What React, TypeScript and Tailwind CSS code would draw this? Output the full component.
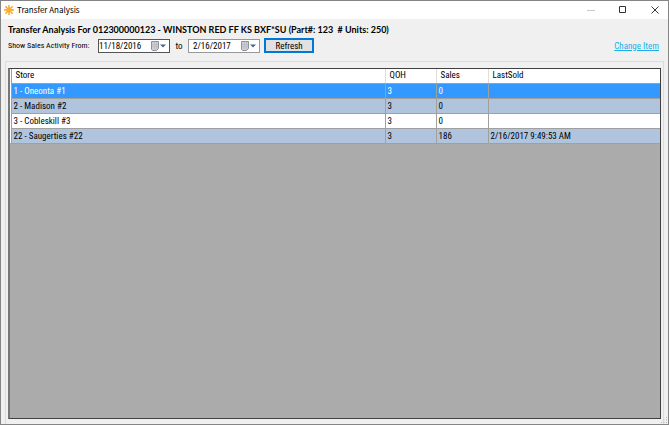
import { useState } from 'react'

type StoreRow = {
  store: string
  qoh: number
  sales: number
  lastSold: string
}

const rows: StoreRow[] = [
  { store: '1 - Oneonta #1', qoh: 3, sales: 0, lastSold: '' },
  { store: '2 - Madison #2', qoh: 3, sales: 0, lastSold: '' },
  { store: '3 - Cobleskill #3', qoh: 3, sales: 0, lastSold: '' },
  { store: '22 - Saugerties #22', qoh: 3, sales: 186, lastSold: '2/16/2017 9:49:53 AM' },
]

function SunIcon() {
  return (
    <svg className="h-[10px] w-[10px] shrink-0" viewBox="0 0 20 20" aria-hidden="true">
      <g stroke="#f2a11f" strokeWidth="2.8" strokeLinecap="round">
        <path d="M10 1v18M1 10h18M3.6 3.6l12.8 12.8M16.4 3.6L3.6 16.4" />
      </g>
      <circle cx="10" cy="10" r="5" fill="#f7b030" />
    </svg>
  )
}

function CalendarIcon() {
  return (
    <svg className="h-[10px] w-[18px]" viewBox="0 0 18 10" aria-hidden="true">
      <path d="M.5 .5h7v7l-2 2h-4l-1-1z" fill="#cdcdd5" stroke="#909098" />
      <path d="M1 3.5h6M1 5.5h6M3.5 1v7M5.5 1v7" stroke="#b4b4bd" strokeWidth=".5" />
      <path d="M9 3.5h6l-3 3z" fill="#47648c" />
    </svg>
  )
}

function DateField({ id, label, value, onChange, className }: {
  id: string
  label: string
  value: string
  onChange: (value: string) => void
  className: string
}) {
  return (
    <div className={`flex h-[14px] w-[72px] items-center border bg-white ${className}`}>
      <input
        id={id}
        aria-label={label}
        value={value}
        onChange={(e) => onChange(e.target.value)}
        className="h-full min-w-0 flex-1 bg-transparent outline-none"
      />
      <button type="button" aria-label={`${label} calendar`}>
        <CalendarIcon />
      </button>
    </div>
  )
}

export default function App() {
  const [from, setFrom] = useState('11/18/2016')
  const [to, setTo] = useState('2/16/2017')
  const [selected, setSelected] = useState(0)

  const rowColor = (idx: number) => {
    if (idx === selected) return 'bg-[#3399ff] text-white'
    return idx % 2 ? 'bg-[#b0c4de]' : 'bg-white'
  }

  return (
    <div className="flex h-screen flex-col border border-[#858585] bg-[#f0f0f0] font-['Roboto_Condensed','Liberation_Sans',sans-serif] text-[9px] leading-[14px] text-black">
      {/* Title bar */}
      <header className="flex h-[18px] shrink-0 items-center bg-white pl-[3px] pr-[9px]">
        <SunIcon />
        <h1 className="ml-[3px] flex-1 font-['Noto_Sans_CJK_SC',sans-serif] text-[8px]">Transfer Analysis</h1>
        <div className="flex items-center gap-6">
          <button type="button" aria-label="Minimize" disabled>
            <svg className="size-2" viewBox="0 0 8 8" stroke="#c8c8c8"><path d="M0 4.5h8" /></svg>
          </button>
          <button type="button" aria-label="Maximize">
            <svg className="size-2" viewBox="0 0 8 8" fill="none" stroke="#333"><path d="M.5 .5h6v6h-6z" /></svg>
          </button>
          <button type="button" aria-label="Close">
            <svg className="size-2" viewBox="0 0 8 8" stroke="#333"><path d="M.5 .5l7 7M7.5 .5l-7 7" /></svg>
          </button>
        </div>
      </header>

      <div className="shrink-0 px-[7px] pt-1">
        <h2 className="font-['Lato','Liberation_Sans',sans-serif] font-bold whitespace-pre">
          Transfer Analysis For 012300000123 - WINSTON RED FF KS BXF*SU (Part#: 123  # Units: 250)
        </h2>
        <form className="flex items-center pt-px" onSubmit={(e) => e.preventDefault()}>
          <label htmlFor="from" className="w-[90px] text-[8px] whitespace-nowrap">Show Sales Activity From:</label>
          <DateField id="from" label="From date" value={from} onChange={setFrom} className="border-[#555]" />
          <label htmlFor="to" className="w-[18px] text-center">to</label>
          <DateField id="to" label="To date" value={to} onChange={setTo} className="border-[#999] pl-1" />
          <button type="submit" className="ml-1 h-[15px] w-[50px] border-2 border-[#0078d7] bg-[#e1e1e1] leading-[10px]">
            Refresh
          </button>
          <a href="#change-item" className="ml-auto pr-[2px] text-[#1ab0e8] underline">Change Item</a>
        </form>
      </div>

      {/* Results */}
      <main className="mx-1 mt-2 flex min-h-0 flex-1 flex-col border border-b-0 border-[#dcdcdc] px-[2px] pb-[5px] pt-[6px]">
        <div className="flex-1 overflow-hidden border border-l-2 border-[#404040] border-l-[#777] bg-[#ababab]">
          <table className="w-full table-fixed border-collapse text-left">
            <colgroup>
              <col className="w-px" />
              <col />
              <col className="w-[51px]" />
              <col className="w-[52px]" />
              <col className="w-[172px]" />
            </colgroup>
            <thead>
              <tr className="h-[14px] bg-white leading-[13px]">
                <th className="border-r border-[#a0a0a0] p-0" />
                {['Store', 'QOH', 'Sales', 'LastSold'].map((name) => (
                  <th key={name} className="border-r border-b border-r-[#ddd] border-b-[#a0a0a0] p-0 pl-1 font-normal last:border-r-0">
                    {name}
                  </th>
                ))}
              </tr>
            </thead>
            <tbody>
              {rows.map((row, idx) => (
                <tr key={row.store} className={`h-[15px] ${rowColor(idx)}`} onClick={() => setSelected(idx)}>
                  <td className="border-r border-[#a0a0a0] bg-white p-0" />
                  {[row.store, row.qoh, row.sales, row.lastSold].map((value, col) => (
                    <td key={col} className="border-r border-b border-[#a0a0a0] p-0 pl-[2px] last:border-r-0">
                      {value}
                    </td>
                  ))}
                </tr>
              ))}
            </tbody>
          </table>
        </div>
      </main>

      {/* Resize grip */}
      <svg className="pointer-events-none absolute right-px bottom-px size-[7px]" viewBox="0 0 7 7" fill="#b8b8b8" aria-hidden="true">
        <path d="M5 0h1v1h-1zM5 2.5h1v1h-1zM2.5 2.5h1v1h-1zM5 5h1v1h-1zM2.5 5h1v1h-1zM0 5h1v1h-1z" />
      </svg>
    </div>
  )
}
